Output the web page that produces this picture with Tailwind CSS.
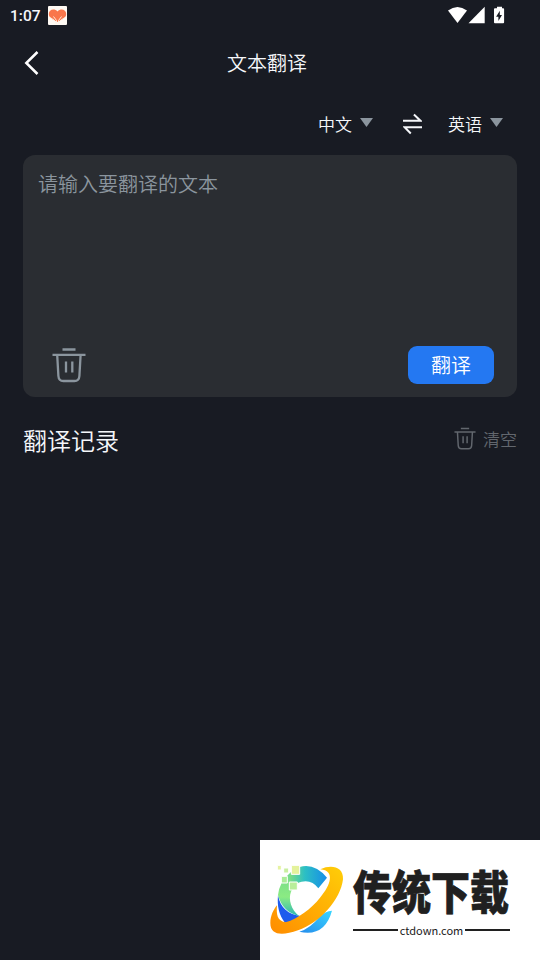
<!DOCTYPE html>
<html lang="zh-CN">
<head>
<meta charset="utf-8">
<meta name="viewport" content="width=device-width, initial-scale=1">
<title>文本翻译</title>
<script src="https://cdn.jsdelivr.net/npm/@tailwindcss/browser@4"></script>
</head>
<body class="h-[960px] w-[540px] overflow-hidden bg-[#181b23] font-['Noto_Sans_CJK_SC',sans-serif] font-[350] text-[#f5f7fa]">
<svg class="hidden">
  <symbol id="trash" viewBox="0 0 34 36">
    <path d="M10.500 2.500h13M.5 7.800h33M5.200 8l1.200 21q.3 5 5 5h11q4.700 0 5-5l1.200-21M14 14.500v11M20.300 14.500v11" fill="none" stroke="currentColor" stroke-width="2.300"/>
  </symbol>
</svg>
<main class="relative flex h-full flex-col">
  <div class="flex h-[31px] items-center pl-[10px] pr-[35px]">
    <span class="w-[38px] pt-[2px] font-[Roboto,sans-serif] text-[15.500px] font-medium leading-[29px]">1:07</span>
    <svg class="size-[19px]" viewBox="0 0 19 19">
      <rect width="19" height="19" rx="1" fill="#fffaf4"/>
      <path d="M9.500 16C5 13.500.8 12 .8 8 .8 3.300 6.500 2 9.500 5.500 12.500 2 18.200 3.300 18.200 8c0 4-4.200 5.500-8.700 8Z" fill="#f9764b"/>
      <path d="M2 11.500 6 14q2 1.500 2.200 4M17 11.500 13 14q-2 1.500-2.200 4M5.500 10.500l3 4v3M13.500 10.500l-3 4v3" fill="none" stroke="#fff3e6" stroke-width=".9"/>
    </svg>
    <svg class="ml-auto h-[20px] w-[57px]" viewBox="0 0 57 20" fill="#fff">
      <path d="M0 4.500Q9.500-2.600 19 4.500L9.500 17Z"/>
      <path d="M36.700.700v16.500H20.500Z"/>
      <path d="M49 .700h5v1.600h1.200q.9 0 .9.900v13.100q0 .9-.9.900h-8.300q-.9 0-.9-.9V3.200q0-.9.900-.9H49Z"/>
      <path d="M51.800 4.800l-3.700 5.900h2.300v4.200l3.600-5.800h-2.200Z" fill="#181b23"/>
    </svg>
  </div>
  <header class="grid h-[64px] grid-cols-[60px_1fr_60px] items-center">
    <svg class="ml-[24px] h-[26px] w-[16px]" viewBox="0 0 16 26" fill="none" stroke="#fff" stroke-width="2.500"><path d="M13.500 2 2.300 13 13.500 24"/></svg>
    <h1 class="-ml-[6px] text-center text-[20px] leading-[30px]">文本翻译</h1>
  </header>
  <div class="flex h-[60px] items-center pb-[3px] pl-[318px] text-[17px] leading-[24px]">
    <span class="w-[34px]">中文</span>
    <svg class="mb-[2px] ml-[8px] h-[9px] w-[13px]" viewBox="0 0 13 9"><path d="M0 0h13L6.500 9Z" fill="#8b959e"/></svg>
    <svg class="ml-[30px] h-[22px] w-[19px]" viewBox="0 0 20 22" fill="none" stroke="#f5f7fa" stroke-width="2.100"><path d="M0 7.500h18.300L11.500 1M20 14.500H1.700l6.500 6.500"/></svg>
    <span class="ml-[26px] w-[34px]">英语</span>
    <svg class="mb-[2px] ml-[8px] h-[9px] w-[13px]" viewBox="0 0 13 9"><path d="M0 0h13L6.500 9Z" fill="#8b959e"/></svg>
  </div>
  <section class="mx-[23px] flex h-[242px] flex-col justify-between rounded-[12px] bg-[#2a2d32] pt-[14px] pr-[23px] pb-[13px] pl-[15px]">
    <p class="text-[20px] leading-[30px] text-[#8b959e]">请输入要翻译的文本</p>
    <div class="flex items-center justify-between">
      <svg class="ml-[14px] h-[36px] w-[34px] text-[#8b959e]"><use href="#trash"/></svg>
      <button class="h-[38px] w-[86px] rounded-[9px] bg-[#2478f2] text-[20px] leading-[38px] text-white">翻译</button>
    </div>
  </section>
  <div class="mx-[23px] mt-[22px] flex h-[40px] items-center justify-between">
    <h2 class="pt-[2px] text-[24px] leading-[36px]">翻译记录</h2>
    <div class="flex items-center gap-[7px] pb-px text-[17px] leading-[24px] text-[#62676e]">
      <svg class="h-[23px] w-[22px]"><use href="#trash"/></svg>
      <span>清空</span>
    </div>
  </div>
  <aside class="mt-auto ml-auto flex h-[120px] w-[280px] items-start bg-white pt-[22px] pl-[8px] text-[#202020]">
    <svg class="h-[75px] w-[77px] shrink-0" viewBox="39 81 231 225">
      <defs>
        <linearGradient id="ring" x1="0" y1="1" x2="1" y2="0"><stop stop-color="#ff8c00"/><stop offset="1" stop-color="#ffce08"/></linearGradient>
        <linearGradient id="arc" x1="0" y1="0" x2="1" y2="0"><stop stop-color="#79dc83"/><stop offset=".4" stop-color="#2cbfc4"/><stop offset="1" stop-color="#168de9"/></linearGradient>
        <linearGradient id="green" x1="0" y1="0" x2="0" y2="1"><stop stop-color="#70d68c"/><stop offset=".6" stop-color="#8beb83"/><stop offset="1" stop-color="#2bb8b4"/></linearGradient>
        <linearGradient id="tail" x1="0" y1="1" x2="1" y2="0"><stop stop-color="#258cec"/><stop offset="1" stop-color="#39d6ff"/></linearGradient>
      </defs>
      <path d="M69 180C75 218 100 238 134 242L120 258 90 263C72 240 66 214 69 180Z" fill="#1e5ced"/>
      <path d="M105 114Q73 141 69 180C78 214 99 235 132 243 109 224 99 194 108 170Q114 154 130 144L136 100Z" fill="url(#green)"/>
      <path d="M134 96Q178 83 216 128L190 160Q167 128 127 144L108 158 105 114Z" fill="url(#arc)"/>
      <path d="M133 290Q165 281 193 246 211 228 231 227 209 307 133 290Z" fill="url(#tail)"/>
      <path d="M196 103C231 87 266 97 264 133 257 193 195 264 129 286 81 303 46 301 46 264 46 242 56 223 66 211 64 238 66 258 92 262 130 250 168 222 195 188 228 150 241 107 196 103Z" fill="url(#ring)"/>
      <g stroke="#fff" stroke-width="3">
        <path d="M109 91h25v27h-25Z" fill="#e4f29b"/>
        <path d="M86 99h15v15H86Z" fill="#c9efa0"/>
        <path d="M79 124h18v20H79Z" fill="#abec98"/>
        <path d="M103 141h24v24h-24Z" fill="#b9ee9a"/>
        <path d="M67 91h12v14H67Z" fill="#e6f3a2"/>
      </g>
    </svg>
    <div class="ml-[8px] w-[157px]">
      <div class="flex h-[58px] items-center whitespace-nowrap text-[39px] leading-[40px] font-black"><span class="inline-block origin-center -translate-y-[2px] scale-y-[1.18] [-webkit-text-stroke:.6px_#202020]">传统下载</span></div>
      <div class="mt-[2px] flex h-[16px] items-center gap-[2px]">
        <span class="h-[2px] flex-1 bg-[#202020]"></span>
        <span class="text-[11px] font-normal leading-[14px]">ctdown.com</span>
        <span class="h-[2px] flex-1 bg-[#202020]"></span>
      </div>
    </div>
  </aside>
</main>
</body>
</html>
